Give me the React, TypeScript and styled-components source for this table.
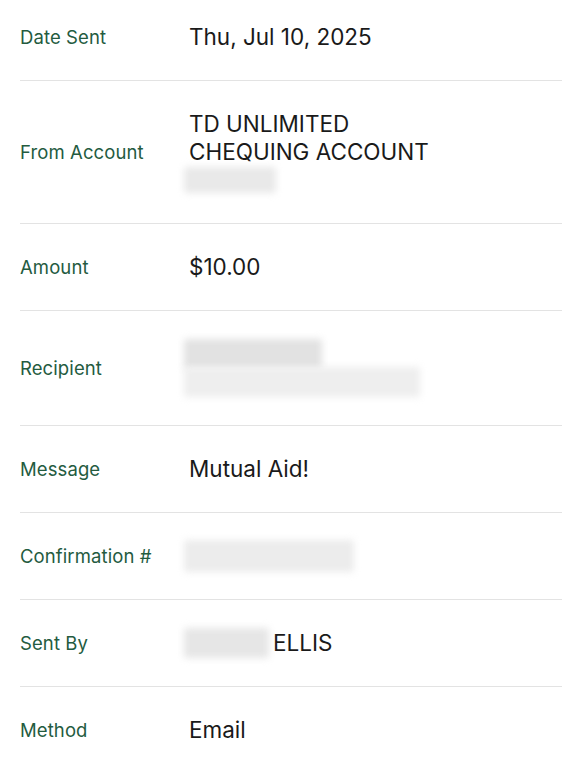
import styled, { createGlobalStyle } from "styled-components";

const GlobalStyle = createGlobalStyle`
  html, body {
    margin: 0;
    padding: 0;
    background: #fff;
  }
  body {
    font-family: Inter, "Noto Sans", sans-serif;
    -webkit-font-smoothing: antialiased;
  }
`;

type Blur = { width: number; tone?: string };

type Detail = {
  label: string;
  lines?: string[];
  blurs?: Blur[];
  blurHeight?: number;
  suffix?: string;
  top?: number;
};

// transfer details, in screen order
const details: Detail[] = [
  { label: "Date Sent", lines: ["Thu, Jul 10, 2025"], top: 23 },
  {
    label: "From Account",
    lines: ["TD UNLIMITED", "CHEQUING ACCOUNT"],
    blurs: [{ width: 92, tone: "#e9e9e9" }],
    blurHeight: 26
  },
  { label: "Amount", lines: ["$10.00"] },
  {
    label: "Recipient",
    blurs: [
      { width: 138, tone: "#e2e2e2" },
      { width: 236, tone: "#eeeeee" }
    ],
    blurHeight: 30
  },
  { label: "Message", lines: ["Mutual Aid!"] },
  {
    label: "Confirmation #",
    blurs: [{ width: 170, tone: "#ececec" }],
    blurHeight: 32
  },
  {
    label: "Sent By",
    blurs: [{ width: 85, tone: "#e6e6e6" }],
    blurHeight: 30,
    suffix: "ELLIS"
  },
  { label: "Method", lines: ["Email"] }
];

function Redactions({ blurs, h }: { blurs?: Blur[]; h?: number }) {
  return (
    <>
      {blurs?.map((b, i) => (
        <Slot key={i}>
          <Redacted tone={b.tone} h={h} style={{ width: b.width }} />
        </Slot>
      ))}
    </>
  );
}

export default function App() {
  return (
    <>
      <GlobalStyle />
      <List>
        {details.map((d) => (
          <Row key={d.label} top={d.top}>
            <Label>{d.label}</Label>
            <Value>
              {d.lines?.map((l) => (
                <Line key={l}>{l}</Line>
              ))}
              {d.suffix ? (
                <Inline>
                  <Redactions blurs={d.blurs} h={d.blurHeight} />
                  <Line>{d.suffix}</Line>
                </Inline>
              ) : (
                <Redactions blurs={d.blurs} h={d.blurHeight} />
              )}
            </Value>
          </Row>
        ))}
      </List>
    </>
  );
}

const List = styled.div`
  margin-left: 20px;
  height: 765px;
  overflow: hidden;
`;

const Row = styled.div<{ top?: number }>`
  display: flex;
  align-items: center;
  padding: ${(p) => p.top ?? 29}px 0 29px;
  border-bottom: 1px solid #e3e3e3;
`;

const Label = styled.div`
  flex: 0 0 169px;
  font-size: 18.5px;
  color: #245b3f;
  letter-spacing: 0.1px;
`;

const Value = styled.div`
  display: flex;
  flex-direction: column;
  align-items: flex-start;
  font-size: 22.5px;
  color: #1a1a1a;
`;

const Line = styled.div`
  line-height: 28px;
`;

const Inline = styled.div`
  display: flex;
  align-items: center;
  gap: 4px;
`;

const Slot = styled.div`
  display: flex;
  align-items: center;
  height: 28px;
`;

const Redacted = styled.span<{ tone?: string; h?: number }>`
  display: block;
  flex-shrink: 0;
  height: ${(p) => p.h ?? 28}px;
  margin-left: -5px;
  background: ${(p) => p.tone ?? "#e8e8e8"};
  filter: blur(3.5px);
  border-radius: 2px;
`;
